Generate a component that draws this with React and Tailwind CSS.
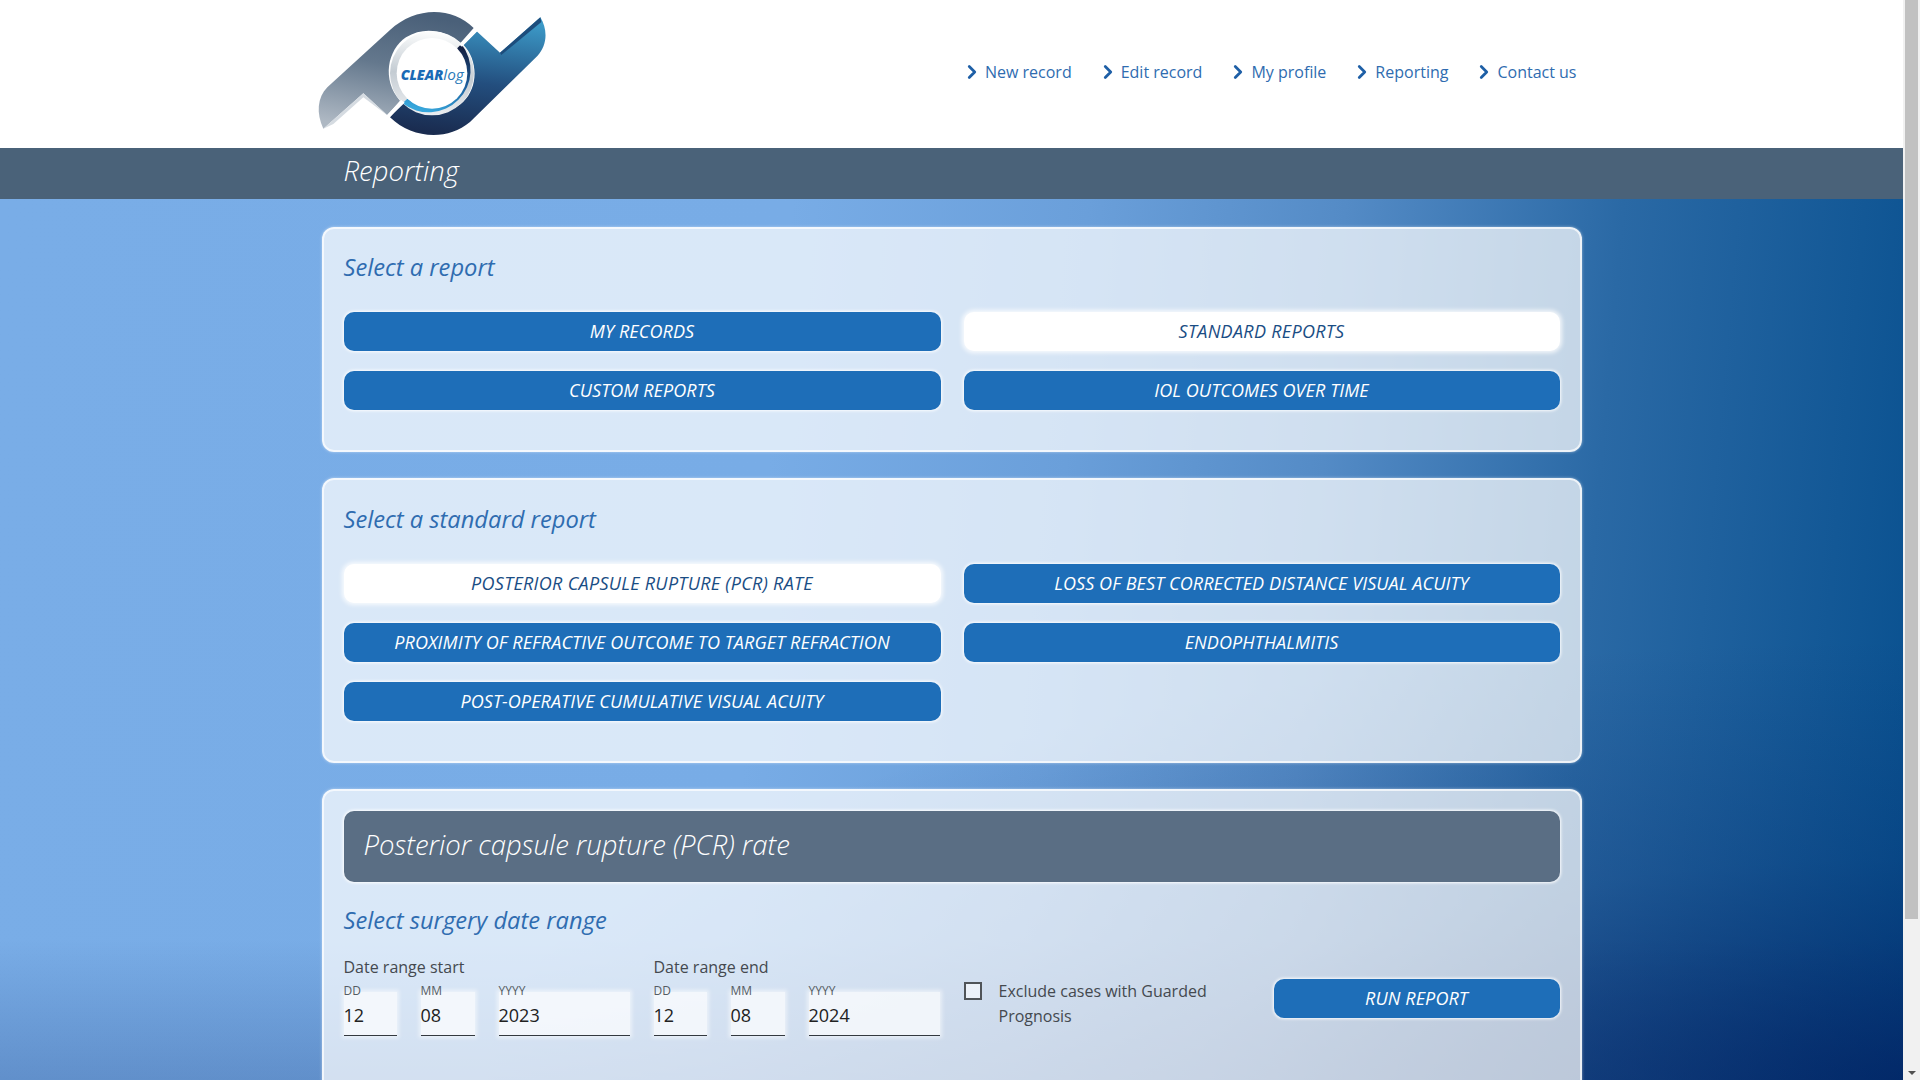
import React from 'react';
import { ChevronRight } from 'lucide-react';

const navItems = ['New record', 'Edit record', 'My profile', 'Reporting', 'Contact us'];

const Logo = () => (
  <svg width="300" height="148" viewBox="0 0 900 444" className="-ml-[22px] shrink-0">
    <defs>
      <linearGradient id="grayBand" x1="0.55" y1="0" x2="0.3" y2="1">
        <stop offset="0" stopColor="#4a6079" />
        <stop offset="0.45" stopColor="#64788d" />
        <stop offset="1" stopColor="#aeb8c3" />
      </linearGradient>
      <linearGradient id="blueBand" x1="0.6" y1="0" x2="0.45" y2="1">
        <stop offset="0" stopColor="#3c9ac8" />
        <stop offset="0.55" stopColor="#234e7e" />
        <stop offset="1" stopColor="#1a2c50" />
      </linearGradient>
      <linearGradient id="ringGray" x1="0.3" y1="0" x2="0.2" y2="1">
        <stop offset="0" stopColor="#fbfcfc" />
        <stop offset="0.5" stopColor="#c4ccd3" />
        <stop offset="1" stopColor="#eef0f2" />
      </linearGradient>
      <linearGradient id="ringBlue" x1="0.7" y1="0" x2="0.4" y2="1">
        <stop offset="0" stopColor="#141f40" />
        <stop offset="0.5" stopColor="#1c5f9d" />
        <stop offset="1" stopColor="#37a7dc" />
      </linearGradient>
    </defs>
    {/* gray half */}
    <path
      d="M521 84 C455 18 345 20 270 90 L82 262 C52 292 48 340 70 386 L190 280 L262 346 L300 302 C245 240 262 150 318 112 C370 80 430 88 482 128 Z"
      fill="url(#grayBand)"
    />
    <path d="M190 280 L70 386 L100 372 L190 292 L262 346 Z" fill="#d5dbe1" />
    {/* blue half */}
    <path
      d="M530 94 L600 158 L721 52 C744 90 742 135 712 168 L510 366 C440 425 335 415 270 352 L312 306 C355 350 440 352 490 305 C535 262 535 180 490 134 Z"
      fill="url(#blueBand)"
    />
    <path d="M600 158 L721 52 L724 66 L604 165 Z" fill="#1d4d7c" />
    {/* ring */}
    <circle cx="396" cy="220" r="126" fill="url(#ringGray)" />
    <path d="M484 132 A126 126 0 0 1 308 310 L322 296 A106 106 0 0 0 470 146 Z" fill="url(#ringBlue)" />
    <path d="M524 86 L478 134 L486 140 L532 94 Z M304 300 L258 348 L266 354 L314 308 Z" fill="#ffffff" />
    <circle cx="396" cy="220" r="106" fill="#ffffff" />
    <text x="302" y="240" fontFamily="'Open Sans', sans-serif" fontStyle="italic" fontSize="42" fontWeight="800" fill="#1b6ab5">
      CLEAR<tspan fontWeight="400" fontSize="46" fill="#2a7ab8">log</tspan>
    </text>
  </svg>
);

const ReportButton = ({ label, active }) => (
  <button
    className={`h-[39px] rounded-[10px] pb-[2px] text-[18px] leading-none font-medium italic ${
      active
        ? 'bg-white tracking-[0.3px] text-[#1a4d84] shadow-[0_0_4px_2px_rgba(255,255,255,0.8)]'
        : 'bg-[#1e6eb8] tracking-[0.1px] text-white shadow-[0_0_3px_1px_rgba(255,255,255,0.9)]'
    }`}
  >
    {label}
  </button>
);

const Card = ({ children, className }) => (
  <section
    className={`rounded-[12px] border-2 border-white/70 bg-white/72 px-[20px] shadow-[0_0_3px_rgba(255,255,255,0.5)] ${className}`}
  >
    {children}
  </section>
);

const Heading = ({ children, className }) => (
  <h2 className={`text-[23.7px] leading-[32px] italic text-[#2f6cb0] ${className}`}>{children}</h2>
);

const DateField = ({ label, value, width }) => (
  <div className={`flex flex-col ${width}`}>
    <span className="relative z-10 h-[8px] text-[12px] leading-[13px] text-[#555c63]">{label}</span>
    <div className="flex h-[44px] items-center border-b border-[#33393f] bg-white/70 pt-[3px] text-[18px] text-[#222] shadow-[0_0_4px_2px_rgba(255,255,255,0.55)]">
      {value}
    </div>
  </div>
);

const DateGroup = ({ title, year }) => (
  <div className="flex flex-col">
    <div className="h-[24px] text-[16px] leading-[24px] text-[#44494f]">{title}</div>
    <div className="mt-[5px] flex gap-[24px]">
      <DateField label="DD" value="12" width="w-[53px]" />
      <DateField label="MM" value="08" width="w-[54px]" />
      <DateField label="YYYY" value={year} width="w-[131px]" />
    </div>
  </div>
);

export default function App() {
  return (
    <div className="flex h-screen overflow-hidden bg-white font-['Open_Sans',sans-serif]">
      <div className="flex min-w-0 flex-1 flex-col">
        {/* Header */}
        <header className="h-[148px] shrink-0 bg-white">
          <div className="mx-auto flex h-full w-[1260px] items-center justify-between">
            <Logo />
            <nav className="mb-[4px] mr-[5px] flex gap-[33px]">
              {navItems.map((item) => (
                <a key={item} className="flex items-center text-[16px] leading-[24px] text-[#2f6cb0]">
                  <ChevronRight size={22} strokeWidth={3} className="-ml-[8px] mr-[2px] text-[#1e5fa6]" />
                  {item}
                </a>
              ))}
            </nav>
          </div>
        </header>

        {/* Title band */}
        <div className="h-[51px] shrink-0 bg-[#4a6279]">
          <div className="mx-auto w-[1260px] pl-[22px] text-[27.5px] font-light italic leading-[45px] text-white">
            Reporting
          </div>
        </div>

        {/* Content */}
        <main className="flex-1 overflow-hidden bg-[radial-gradient(ellipse_75%_50%_at_100%_100%,rgba(0,26,90,0.65),rgba(0,26,90,0.2)_50%,transparent),linear-gradient(to_bottom,transparent_84%,rgba(0,26,90,0.2)_100%),linear-gradient(95deg,#79ade7_0%,#78ace6_40%,#6a9fda_55%,#548bc6_68%,#2a69a5_82%,#08508f_100%)]">
          <div className="mx-auto flex w-[1260px] flex-col gap-[26px] pt-[28px]">
            <Card className="h-[225px] pt-[22px]">
              <Heading>Select a report</Heading>
              <div className="mt-[29px] grid grid-cols-[597px_596px] gap-x-[23px] gap-y-[20px]">
                <ReportButton label="MY RECORDS" />
                <ReportButton label="STANDARD REPORTS" active />
                <ReportButton label="CUSTOM REPORTS" />
                <ReportButton label="IOL OUTCOMES OVER TIME" />
              </div>
            </Card>

            <Card className="h-[285px] pt-[23px]">
              <Heading>Select a standard report</Heading>
              <div className="mt-[29px] grid grid-cols-[597px_596px] gap-x-[23px] gap-y-[20px]">
                <ReportButton label="POSTERIOR CAPSULE RUPTURE (PCR) RATE" active />
                <ReportButton label="LOSS OF BEST CORRECTED DISTANCE VISUAL ACUITY" />
                <ReportButton label="PROXIMITY OF REFRACTIVE OUTCOME TO TARGET REFRACTION" />
                <ReportButton label="ENDOPHTHALMITIS" />
                <ReportButton label="POST-OPERATIVE CUMULATIVE VISUAL ACUITY" />
              </div>
            </Card>

            <Card className="h-[320px] pt-[20px]">
              <div className="flex h-[71px] items-center rounded-[10px] bg-[#5a6e84] pb-[3px] pl-[20px] text-[27.5px] font-light italic text-white shadow-[0_0_3px_1px_rgba(255,255,255,0.95)]">
                Posterior capsule rupture (PCR) rate
              </div>
              <Heading className="mt-[22px]">Select surgery date range</Heading>
              <div className="mt-[19px] flex items-start">
                <div className="flex gap-[24px]">
                  <DateGroup title="Date range start" year="2023" />
                  <DateGroup title="Date range end" year="2024" />
                </div>
                <label className="ml-[24px] mt-[24px] flex w-[270px] items-start gap-[17px] text-[16px] leading-[25px] text-[#44494f]">
                  <span className="mt-[3px] h-[18px] w-[18px] shrink-0 border-2 border-[#505458] bg-white/60" />
                  Exclude cases with Guarded Prognosis
                </label>
                <div className="ml-auto mt-[24px] grid w-[286px]">
                  <ReportButton label="RUN REPORT" />
                </div>
              </div>
            </Card>
          </div>
        </main>
      </div>

      {/* Scrollbar */}
      <aside className="flex w-[17px] shrink-0 flex-col items-center bg-[#f1f1f1]">
        <div className="mt-[2px] h-0 w-0 border-x-[4px] border-b-[4px] border-x-transparent border-b-[#505050]" />
        <div className="mt-[-6px] h-[919px] w-[13px] bg-[#c1c1c1]" />
        <div className="mt-auto mb-[5px] h-0 w-0 border-x-[4px] border-t-[4px] border-x-transparent border-t-[#505050]" />
      </aside>
    </div>
  );
}
